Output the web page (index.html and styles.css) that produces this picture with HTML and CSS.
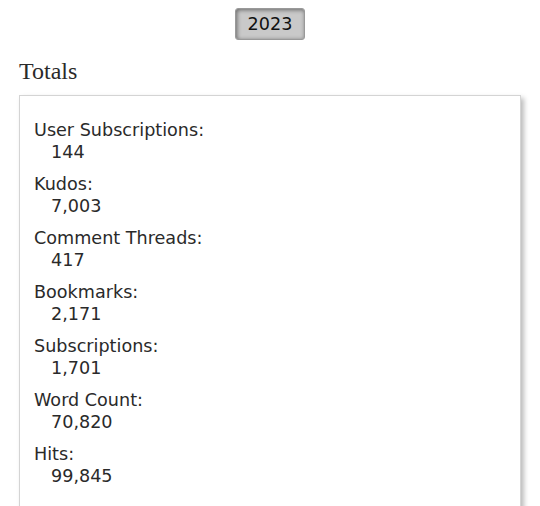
FILE: index.html
```html
<!DOCTYPE html>
<html lang="en">

<head>
  <meta charset="UTF-8" />
  <title>Stats</title>
  <link rel="stylesheet" href="styles.css">
</head>

<body>
  <div class="years">
    <span class="year current">2023</span>
  </div>
  <h3 class="heading">Totals</h3>
  <div class="statsbox">
    <dl class="totals">
      <dt>User Subscriptions:</dt>
      <dd>144</dd>
      <dt>Kudos:</dt>
      <dd>7,003</dd>
      <dt>Comment Threads:</dt>
      <dd>417</dd>
      <dt>Bookmarks:</dt>
      <dd>2,171</dd>
      <dt>Subscriptions:</dt>
      <dd>1,701</dd>
      <dt>Word Count:</dt>
      <dd>70,820</dd>
      <dt>Hits:</dt>
      <dd>99,845</dd>
    </dl>
  </div>
</body>

</html>
```

FILE: styles.css
```css
body {
  margin: 0;
  padding: 0 19px;
  font-family: "DejaVu Sans", Verdana, sans-serif;
  font-size: 17.6px;
  color: #2a2a2a;
  background-color: white;
}

.years {
  display: flex;
  justify-content: center;
  padding-top: 8px;
}

.year {
  display: inline-block;
  width: 70px;
  height: 32px;
  box-sizing: border-box;
  line-height: 30px;
  text-align: center;
  background-color: #c9c9c9;
  border: 1px solid #999;
  border-radius: 3px;
  box-shadow: inset 1px 1px 4px #666;
  color: #111;
}

.heading {
  font-family: "Liberation Serif", Georgia, serif;
  font-weight: normal;
  font-size: 24px;
  margin: 18px 0 10px;
  color: #2a2a2a;
}

.statsbox {
  border: 1px solid #d4d4d4;
  box-shadow: 3px 3px 5px #bbb;
  padding: 23px 14px 30px;
  min-height: 420px;
}

.totals {
  margin: 0;
}

.totals dt {
  line-height: 22px;
}

.totals dd {
  margin: 0 0 10px 17px;
  line-height: 22px;
}
```
